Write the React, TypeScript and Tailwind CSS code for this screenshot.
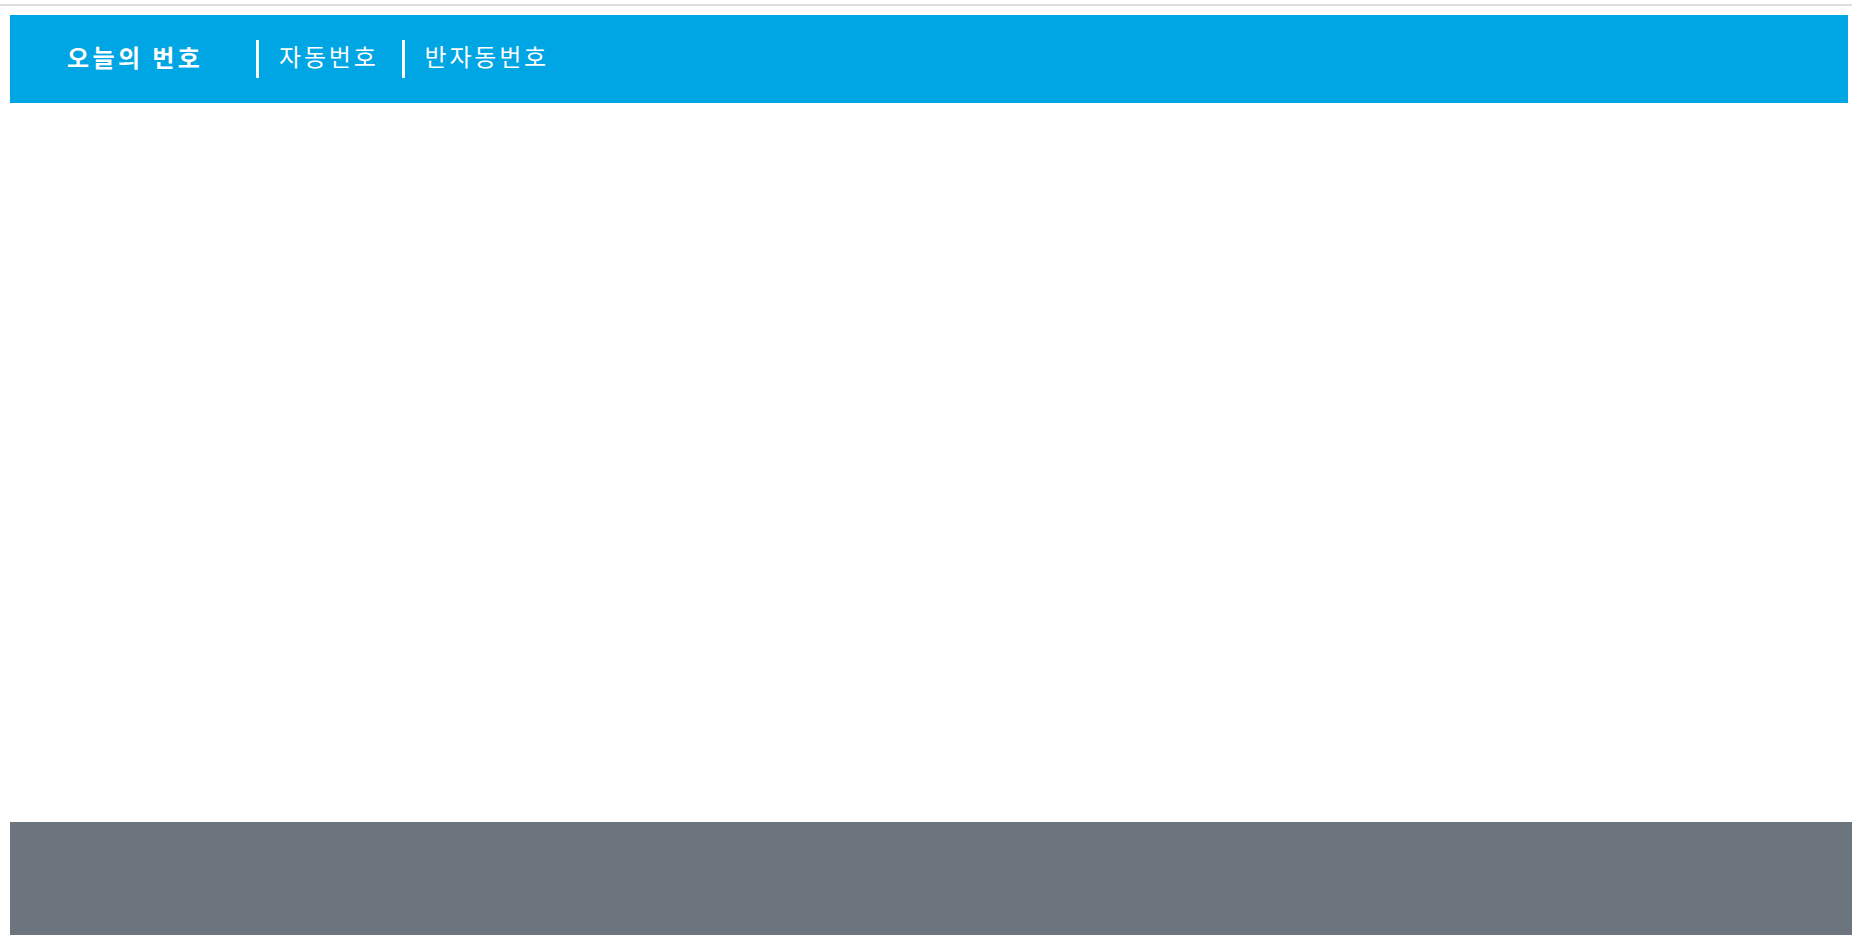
const menus = ["자동번호", "반자동번호"];

const App = () => {
  return (
    <div
      className="min-h-[935px] flex flex-col bg-white overflow-hidden"
      style={{ fontFamily: '"Noto Sans CJK KR", "Noto Sans", sans-serif' }}
    >
      <div className="h-1" />
      <div className="h-[2px] bg-[#dfe0e3]" />
      <header className="mt-[9px] ml-[10px] mr-[4px] h-[88px] bg-[#00a5e3] flex items-center text-white">
        <span className="ml-[57px] w-[189px] text-[24px] font-bold leading-none tracking-[3.4px] -mt-[4px]">
          오늘의 번호
        </span>
        {menus.map((item, idx) => (
          <div key={idx} className="flex items-center">
            <span className="w-[3px] h-[38px] bg-white" />
            <span className="pl-[20px] pr-[23px] text-[24px] leading-none tracking-[2.8px] -mt-[6px] cursor-pointer">
              {item}
            </span>
          </div>
        ))}
      </header>
      <main className="h-[719px]" />
      <footer className="ml-[10px] flex-1 bg-[#6c757d]" />
    </div>
  );
};

export default App;
